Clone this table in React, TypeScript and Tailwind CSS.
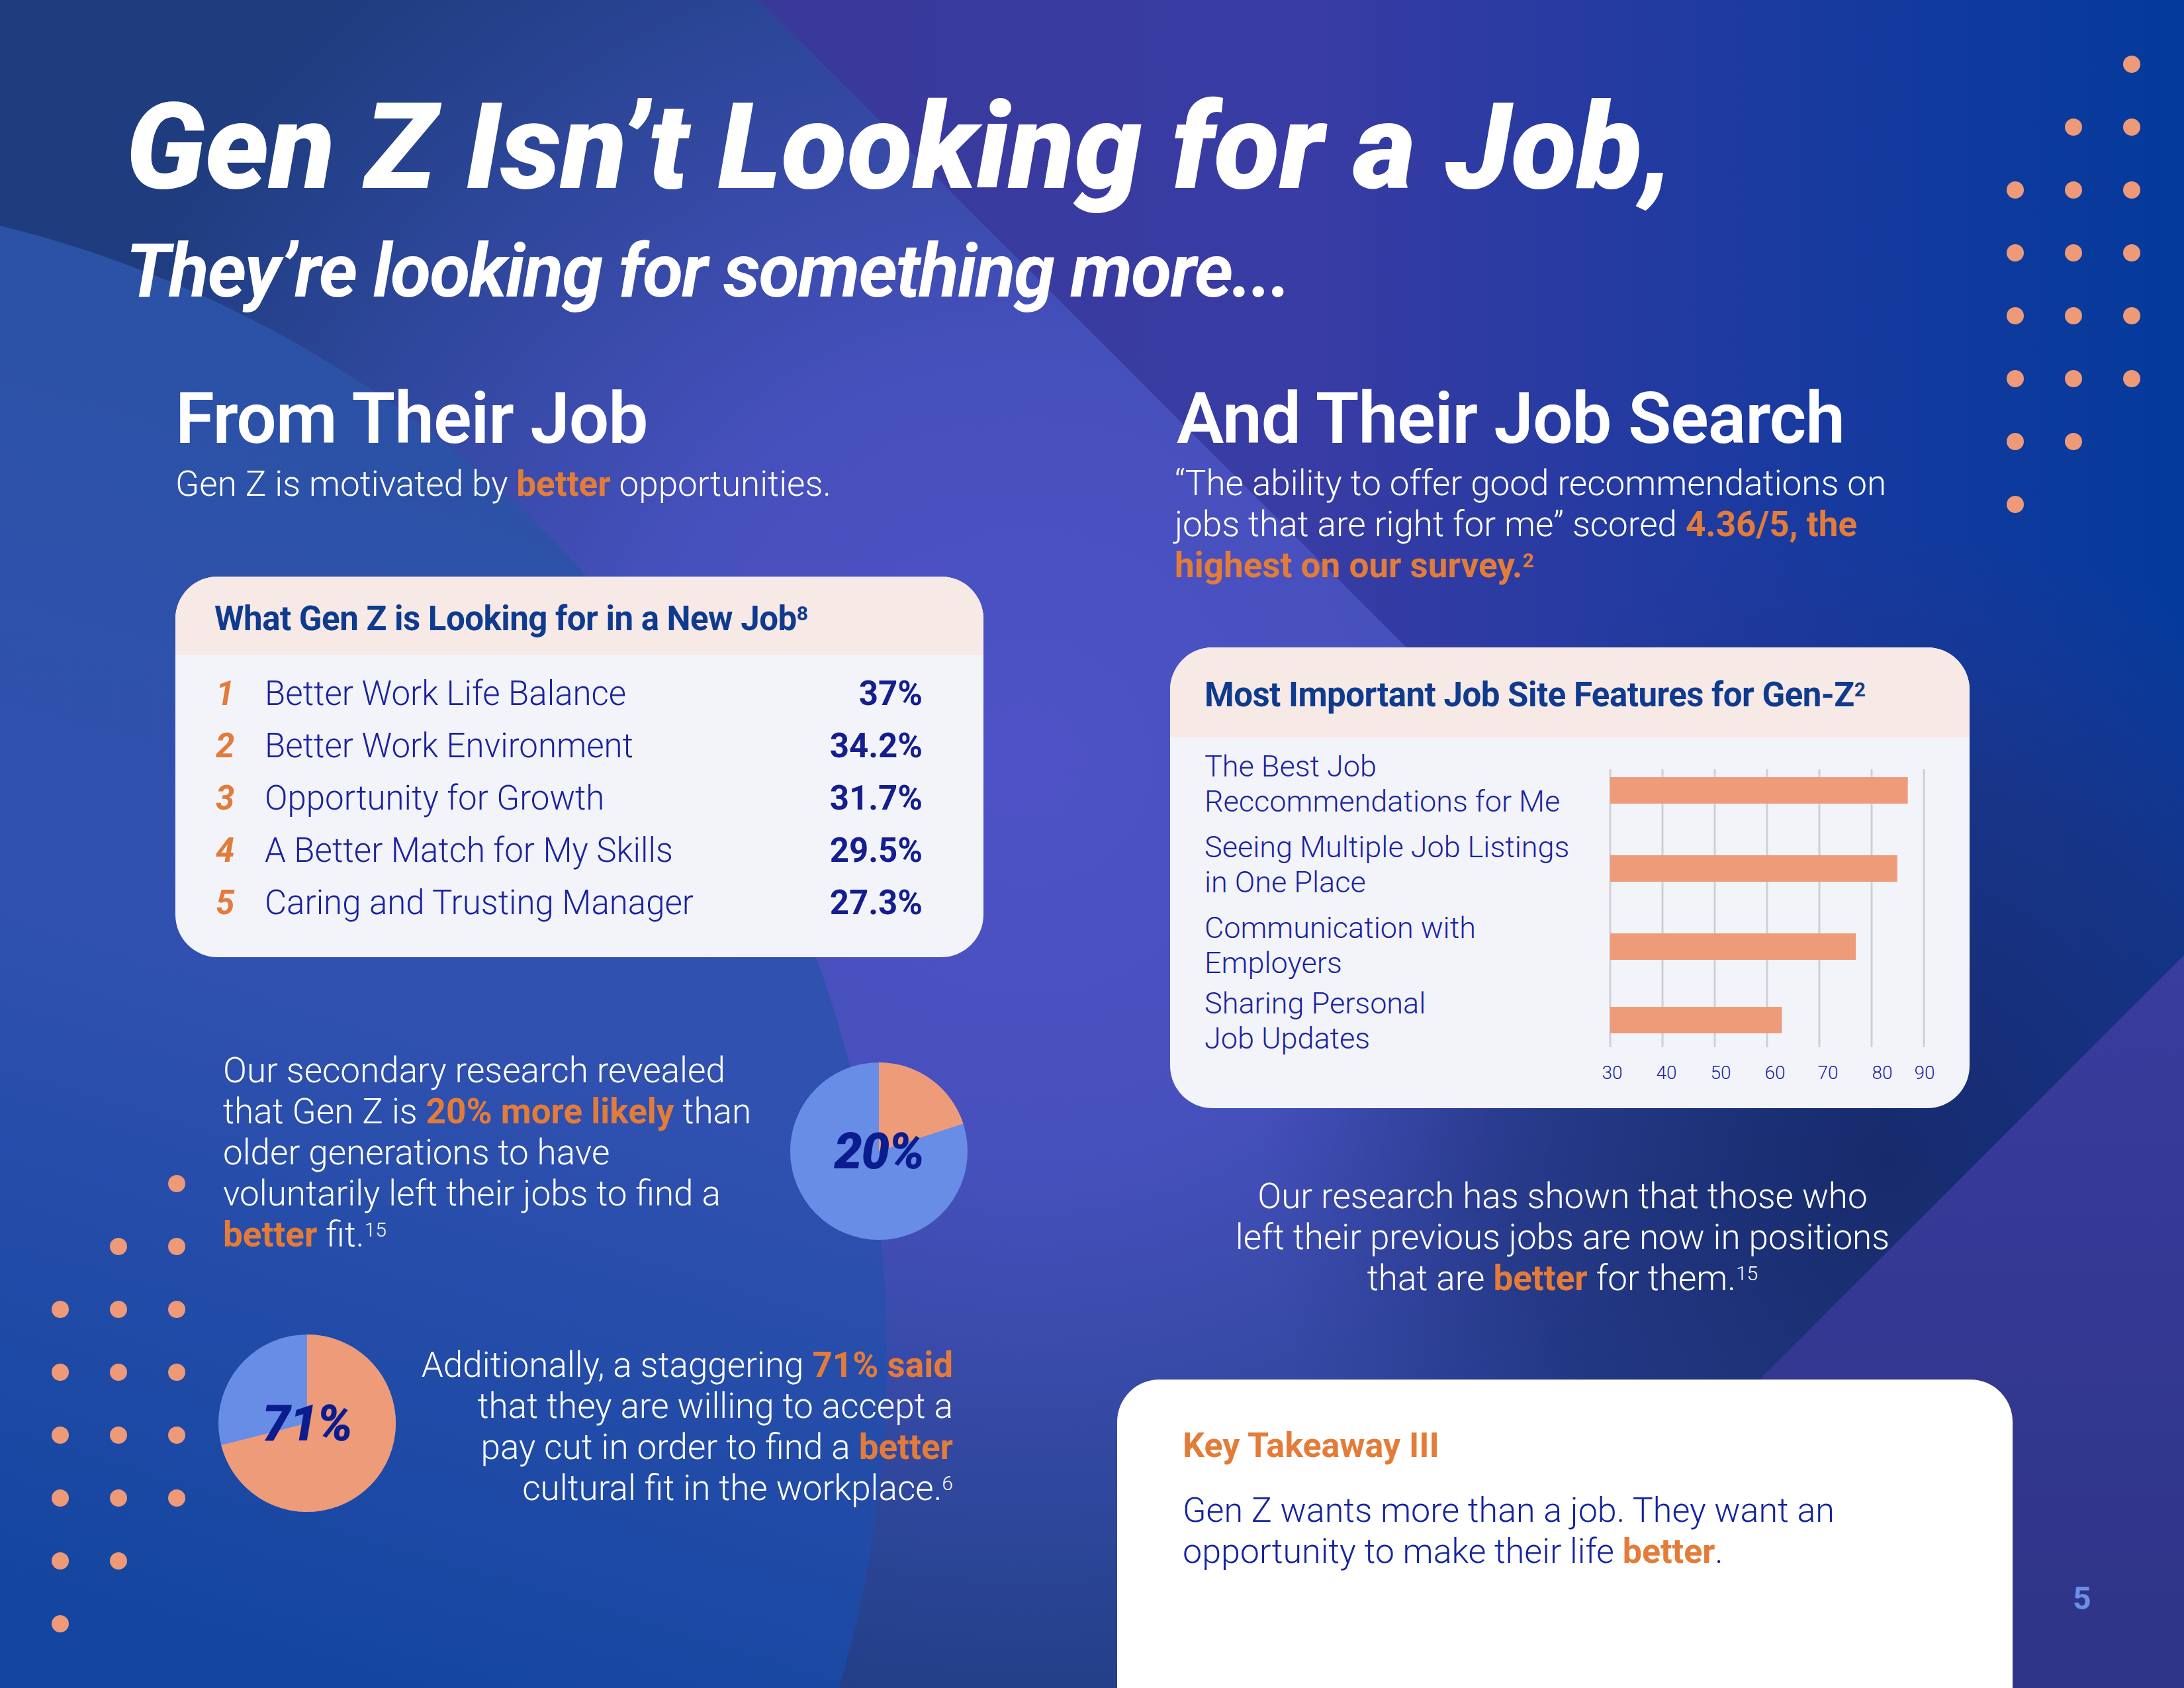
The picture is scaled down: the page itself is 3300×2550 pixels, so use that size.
import React from "react";

const ORANGE = "text-[#e37c39]";

function Dots() {
  const pattern = [
    [0, 0, 1],
    [0, 1, 1],
    [1, 1, 1],
    [1, 1, 1],
    [1, 1, 1],
    [1, 1, 1],
    [1, 1, 0],
    [1, 0, 0],
  ];
  return (
    <div className="grid grid-cols-[repeat(3,26px)] gap-x-[62px] gap-y-[69px]">
      {pattern.flat().map((on, i) => (
        <span key={i} className={on ? "h-[26px] w-[26px] rounded-full bg-[#ee9a78]" : "h-[26px] w-[26px]"} />
      ))}
    </div>
  );
}

function Pie({ value, className }: { value: number; className?: string }) {
  // orange wedge runs clockwise from 12 o'clock
  const r = 134;
  const a = (value / 100) * Math.PI * 2;
  const x = r + r * Math.sin(a);
  const y = r - r * Math.cos(a);
  const large = value > 50 ? 1 : 0;
  return (
    <div className={`relative h-[268px] w-[268px] shrink-0 ${className ?? ""}`}>
      <svg width="268" height="268" viewBox="0 0 268 268" className="absolute inset-0">
        <circle cx={r} cy={r} r={r} fill="#688de7" />
        <path d={`M${r} ${r} L${r} 0 A${r} ${r} 0 ${large} 1 ${x} ${y} Z`} fill="#ee9b7a" />
      </svg>
      <div className="absolute inset-0 flex items-center justify-center">
        <span className="text-[76px] font-black italic leading-none tracking-[-0.02em] text-[#0b1c8f]">{value}%</span>
      </div>
    </div>
  );
}

function Background() {
  return (
    <svg className="absolute inset-0" width="3300" height="2550" viewBox="0 0 3300 2550">
      <defs>
        <linearGradient id="base" x1="0" y1="0" x2="3300" y2="0" gradientUnits="userSpaceOnUse">
          <stop offset="0" stopColor="#1e3c7e" />
          <stop offset="0.35" stopColor="#3a399a" />
          <stop offset="0.6" stopColor="#383ca4" />
          <stop offset="0.8" stopColor="#1c3aa0" />
          <stop offset="1" stopColor="#033a9b" />
        </linearGradient>
        <radialGradient id="glow" cx="1550" cy="1150" r="1550" gradientUnits="userSpaceOnUse">
          <stop offset="0" stopColor="#4e52c6" />
          <stop offset="0.4" stopColor="#4650bc" />
          <stop offset="0.75" stopColor="#2d4699" />
          <stop offset="1" stopColor="#1e3c7e" />
        </radialGradient>
        <linearGradient id="arc" x1="900" y1="500" x2="300" y2="2500" gradientUnits="userSpaceOnUse">
          <stop offset="0" stopColor="#2a52a4" />
          <stop offset="0.5" stopColor="#3151b0" />
          <stop offset="1" stopColor="#1346a0" />
        </linearGradient>
        <radialGradient id="dark" cx="2850" cy="1750" r="950" gradientUnits="userSpaceOnUse">
          <stop offset="0" stopColor="#16296a" stopOpacity="0.95" />
          <stop offset="0.6" stopColor="#1e3079" stopOpacity="0.6" />
          <stop offset="1" stopColor="#2a3590" stopOpacity="0" />
        </radialGradient>
        <linearGradient id="corner" x1="0" y1="1443" x2="0" y2="2550" gradientUnits="userSpaceOnUse">
          <stop offset="0" stopColor="#3a3c9e" />
          <stop offset="1" stopColor="#2e3486" />
        </linearGradient>
        <clipPath id="leftOfDark">
          <polygon points="0,0 3300,0 3300,1443 2193,2550 0,2550" />
        </clipPath>
      </defs>
      <rect width="3300" height="2550" fill="url(#base)" />
      <polygon points="0,0 1147,0 3300,2153 3300,2550 0,2550" fill="url(#glow)" />
      <circle cx="-420" cy="2050" r="1760" fill="url(#arc)" />
      <rect width="3300" height="2550" fill="url(#dark)" clipPath="url(#leftOfDark)" />
      <polygon points="3300,1443 3300,2550 2193,2550" fill="url(#corner)" />
    </svg>
  );
}

const needs = [
  { rank: 1, label: "Better Work Life Balance", pct: "37%" },
  { rank: 2, label: "Better Work Environment", pct: "34.2%" },
  { rank: 3, label: "Opportunity for Growth", pct: "31.7%" },
  { rank: 4, label: "A Better Match for My Skills", pct: "29.5%" },
  { rank: 5, label: "Caring and Trusting Manager", pct: "27.3%" },
];

const features = [
  { lines: ["The Best Job", "Reccommendations for Me"], value: 86.7, gap: "" },
  { lines: ["Seeing Multiple Job Listings", "in One Place"], value: 84.7, gap: "mt-[16px]" },
  { lines: ["Communication with", "Employers"], value: 76.8, gap: "mt-[16px]" },
  { lines: ["Sharing Personal", "Job Updates"], value: 62.7, gap: "mt-[8px]" },
];

function FeatureChart() {
  const ticks = [30, 40, 50, 60, 70, 80, 90];
  const tickLabelX = [16, 98, 180, 262, 342, 424, 488];
  const barY = [25, 143, 261, 372];
  const x0 = 13;
  const unit = 7.93; // px per point
  return (
    <svg width="540" height="500" viewBox="0 0 540 500" className="mt-[35px] shrink-0">
      {ticks.map((t, i) => (
        <line key={t} x1={x0 + 79 * i} x2={x0 + 79 * i} y1="13" y2="433" stroke="#cfcfd5" strokeWidth="3" />
      ))}
      {features.map((f, i) => (
        <rect key={i} x={x0} y={barY[i]} width={(f.value - 30) * unit} height="40" fill="#ee9b7a" />
      ))}
      {ticks.map((t, i) => (
        <text
          key={t}
          x={tickLabelX[i]}
          y="481"
          textAnchor="middle"
          fontSize="28"
          fontFamily="Roboto, sans-serif"
          fontWeight="300"
          fill="#1a24a0"
        >
          {t}
        </text>
      ))}
    </svg>
  );
}

export default function App() {
  return (
    <div className="relative h-[2550px] w-[3300px] overflow-hidden font-[Roboto,sans-serif] text-white">
      <Background />

      <div className="absolute left-[3032px] top-[84px]">
        <Dots />
      </div>
      <div className="absolute left-[78px] top-[1775px]">
        <Dots />
      </div>

      {/* Header */}
      <div className="relative flex flex-col pl-[190px] pt-[131px]">
        <h1 className="text-[182px] font-black italic leading-none">Gen Z Isn’t Looking for a Job,</h1>
        <p className="mt-[41px] text-[112px] font-bold italic leading-none tracking-[-0.02em]">
          They’re looking for something more...
        </p>
      </div>

      <div className="relative mt-[113px] flex">
        {/* Left column */}
        <div className="flex w-[1768px] shrink-0 flex-col pl-[265px]">
          <h2 className="text-[107px] font-semibold leading-none tracking-[-0.01em]">From Their Job</h2>
          <p className="mt-[19px] text-[53px] font-light leading-none">
            Gen Z is motivated by <span className={`font-bold ${ORANGE}`}>better</span> opportunities.
          </p>

          <div className="mt-[113px] h-[575px] w-[1221px] overflow-hidden rounded-[64px] bg-[#f3f4fa]">
            <div className="flex h-[118px] items-center bg-[#f7e9e6] pl-[59px] pt-[8px]">
              <span className="text-[51px] font-bold leading-none tracking-[-0.01em] text-[#0f3b8f]">
                What Gen Z is Looking for in a New Job<sup className="text-[30px]">8</sup>
              </span>
            </div>
            <div className="pl-[61px] pr-[92px] pt-[19px]">
              {needs.map((n) => (
                <div key={n.rank} className="grid grid-cols-[74px_1fr_auto] items-baseline text-[51px] leading-[79px]">
                  <span className="font-bold italic text-[#e27b3b]">{n.rank}</span>
                  <span className="font-light text-[#1b23a0]">{n.label}</span>
                  <span className="font-bold text-[#141e8e]">{n.pct}</span>
                </div>
              ))}
            </div>
          </div>

          <div className="mt-[140px] flex items-start">
            <p className="ml-[72px] w-[857px] shrink-0 text-[53px] font-light leading-[62px]">
              Our secondary research revealed
              <br />
              that Gen Z is <span className={`font-bold ${ORANGE}`}>20% more likely</span> than
              <br />
              older generations to have
              <br />
              voluntarily left their jobs to find a
              <br />
              <span className={`font-bold ${ORANGE}`}>better</span> fit.<sup className="text-[30px]">15</sup>
            </p>
            <Pie value={20} className="mt-[19px]" />
          </div>

          <div className="mt-[120px] flex items-start">
            <Pie value={71} className="ml-[65px]" />
            <p className="mt-[15px] w-[842px] shrink-0 text-right text-[53px] font-light leading-[62px]">
              Additionally, a staggering <span className={`font-bold ${ORANGE}`}>71% said</span>
              <br />
              that they are willing to accept a
              <br />
              pay cut in order to find a <span className={`font-bold ${ORANGE}`}>better</span>
              <br />
              cultural fit in the workplace.<sup className="text-[30px]">6</sup>
            </p>
          </div>
        </div>

        {/* Right column */}
        <div className="flex flex-col">
          <h2 className="ml-[10px] text-[107px] font-semibold leading-none tracking-[-0.01em]">And Their Job Search</h2>
          <p className="ml-[7px] mt-[13px] text-[53px] font-light leading-[62px]">
            “The ability to offer good recommendations on
            <br />
            jobs that are right for me” scored <span className={`font-bold ${ORANGE}`}>4.36/5, the</span>
            <br />
            <span className={`font-bold ${ORANGE}`}>
              highest on our survey.<sup className="text-[30px]">2</sup>
            </span>
          </p>

          <div className="mt-[93px] h-[696px] w-[1208px] overflow-hidden rounded-[64px] bg-[#f3f4fa]">
            <div className="flex h-[136px] items-center bg-[#f7e9e6] pl-[52px] pt-[6px]">
              <span className="text-[51px] font-bold leading-none tracking-[-0.01em] text-[#0f3b8f]">
                Most Important Job Site Features for Gen-Z<sup className="text-[30px]">2</sup>
              </span>
            </div>
            <div className="flex">
              <div className="w-[652px] shrink-0 pl-[52px] pt-[17px]">
                {features.map((f) => (
                  <div key={f.lines[0]} className={`text-[45px] font-light leading-[53px] text-[#1a24a0] ${f.gap}`}>
                    {f.lines[0]}
                    <br />
                    {f.lines[1]}
                  </div>
                ))}
              </div>
              <FeatureChart />
            </div>
          </div>

          <p className="mt-[102px] w-[1208px] pr-[22px] text-center text-[53px] font-light leading-[62px]">
            Our research has shown that those who
            <br />
            left their previous jobs are now in positions
            <br />
            that are <span className={`font-bold ${ORANGE}`}>better</span> for them.<sup className="text-[30px]">15</sup>
          </p>

          <div className="ml-[-80px] mt-[122px] h-[600px] w-[1353px] rounded-[64px] bg-white pl-[99px] pt-[74px]">
            <h3 className={`text-[52px] font-bold leading-none ${ORANGE}`}>Key Takeaway III</h3>
            <p className="mt-[41px] text-[52px] font-light leading-[62px] text-[#1424a0]">
              Gen Z wants more than a job. They want an
              <br />
              opportunity to make their life <span className={`font-bold ${ORANGE}`}>better</span>.
            </p>
          </div>
        </div>
      </div>

      <span className="absolute left-[3132px] top-[2391px] text-[48px] font-bold leading-none text-[#6b8fe8]">5</span>
    </div>
  );
}
